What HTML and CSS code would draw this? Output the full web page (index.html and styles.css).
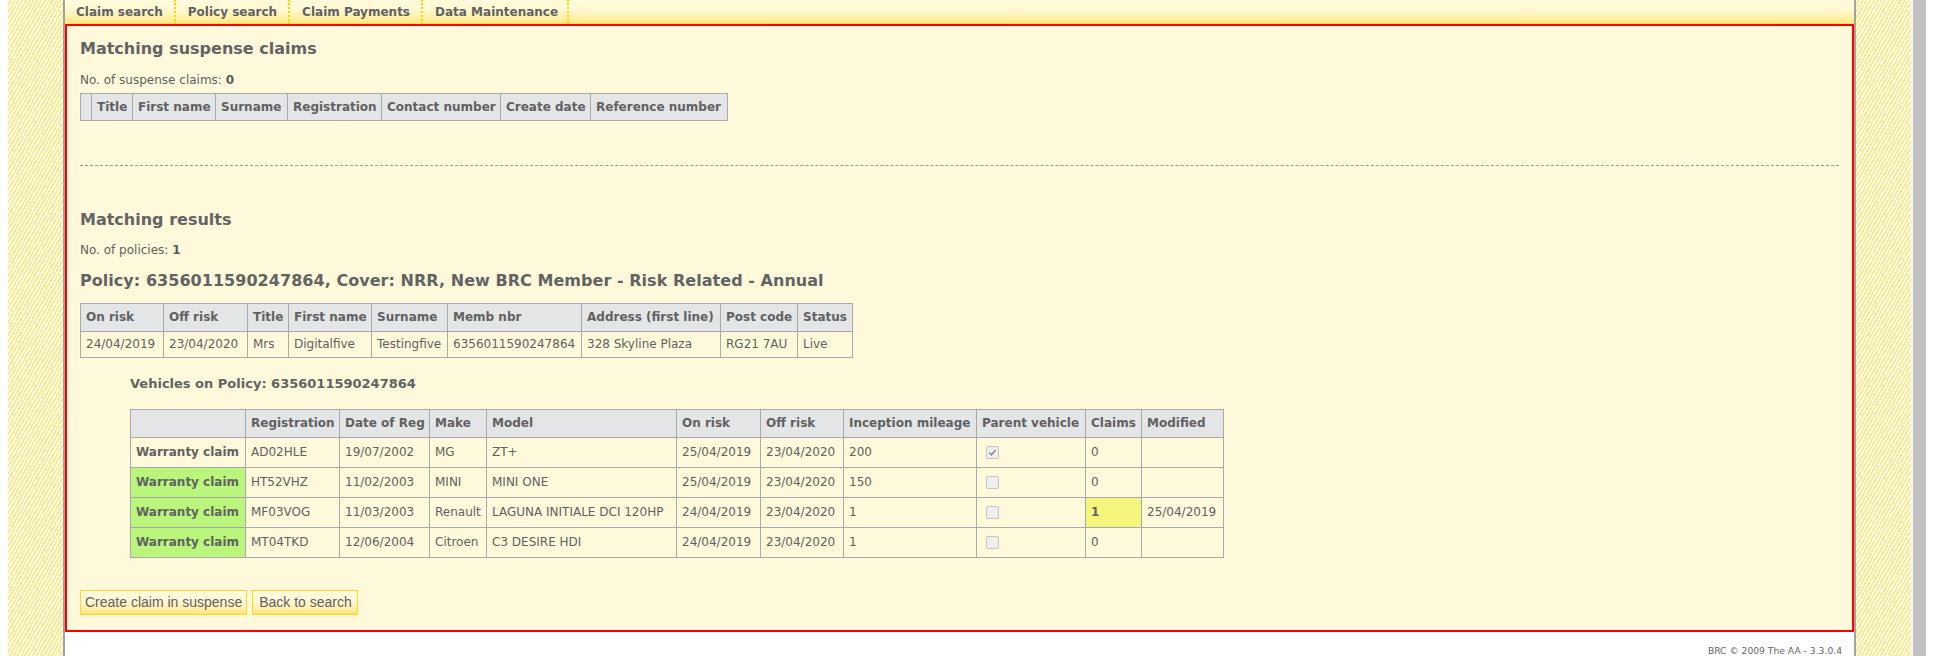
FILE: index.html
```html
<!DOCTYPE html>
<html lang="en">
<head>
<meta charset="utf-8">
<title>BRC - Matching results</title>
<link rel="stylesheet" href="styles.css">
</head>
<body>
<div class="page">
  <div class="gutter"></div>
  <div class="stripes"></div>
  <div class="main">
    <nav class="nav">
      <a class="nav-item" href="#">Claim search</a>
      <a class="nav-item" href="#">Policy search</a>
      <a class="nav-item" href="#">Claim Payments</a>
      <a class="nav-item" href="#">Data Maintenance</a>
    </nav>
    <div class="panel">
      <h2 class="section-title first">Matching suspense claims</h2>
      <p class="count">No. of suspense claims: <b>0</b></p>
      <table class="grid suspense">
        <colgroup>
          <col class="w11"><col class="w41"><col class="w83"><col class="w72"><col class="w94"><col class="w119"><col class="w90"><col class="w137">
        </colgroup>
        <tr class="h27">
          <th></th><th>Title</th><th>First name</th><th>Surname</th><th>Registration</th><th>Contact number</th><th>Create date</th><th>Reference number</th>
        </tr>
      </table>
      <div class="divider"></div>
      <h2 class="section-title results">Matching results</h2>
      <p class="count count-policies">No. of policies: <b>1</b></p>
      <h3 class="policy-title">Policy: 6356011590247864, Cover: NRR, New BRC Member - Risk Related - Annual</h3>
      <table class="grid policy">
        <colgroup>
          <col class="w83"><col class="w84"><col class="w41"><col class="w83"><col class="w76"><col class="w134"><col class="w139"><col class="w77"><col class="w55">
        </colgroup>
        <tr class="h28">
          <th>On risk</th><th>Off risk</th><th>Title</th><th>First name</th><th>Surname</th><th>Memb nbr</th><th>Address (first line)</th><th>Post code</th><th>Status</th>
        </tr>
        <tr class="h26">
          <td>24/04/2019</td><td>23/04/2020</td><td>Mrs</td><td>Digitalfive</td><td>Testingfive</td><td>6356011590247864</td><td>328 Skyline Plaza</td><td>RG21 7AU</td><td>Live</td>
        </tr>
      </table>
      <h4 class="vehicles-title">Vehicles on Policy: 6356011590247864</h4>
      <table class="grid vehicles">
        <colgroup>
          <col class="w115"><col class="w94"><col class="w90"><col class="w57"><col class="w190"><col class="w84"><col class="w83"><col class="w133"><col class="w109"><col class="w56"><col class="w82">
        </colgroup>
        <tr class="h28">
          <th></th><th>Registration</th><th>Date of Reg</th><th>Make</th><th>Model</th><th>On risk</th><th>Off risk</th><th>Inception mileage</th><th>Parent vehicle</th><th>Claims</th><th>Modified</th>
        </tr>
        <tr class="h30">
          <td class="claim">Warranty claim</td><td>AD02HLE</td><td>19/07/2002</td><td>MG</td><td>ZT+</td><td>25/04/2019</td><td>23/04/2020</td><td>200</td>
          <td><span class="chk"><svg width="9" height="9" viewBox="0 0 9 9"><path d="M1.3 4.6 L3.4 6.8 L7.6 1.9" fill="none" stroke="#8c8c8c" stroke-width="1.5"/></svg></span></td>
          <td>0</td><td></td>
        </tr>
        <tr class="h30">
          <td class="claim ok">Warranty claim</td><td>HT52VHZ</td><td>11/02/2003</td><td>MINI</td><td>MINI ONE</td><td>25/04/2019</td><td>23/04/2020</td><td>150</td>
          <td><span class="chk"></span></td>
          <td>0</td><td></td>
        </tr>
        <tr class="h30">
          <td class="claim ok">Warranty claim</td><td>MF03VOG</td><td>11/03/2003</td><td>Renault</td><td>LAGUNA INITIALE DCI 120HP</td><td>24/04/2019</td><td>23/04/2020</td><td>1</td>
          <td><span class="chk"></span></td>
          <td class="has-claims">1</td><td>25/04/2019</td>
        </tr>
        <tr class="h30">
          <td class="claim ok">Warranty claim</td><td>MT04TKD</td><td>12/06/2004</td><td>Citroen</td><td>C3 DESIRE HDI</td><td>24/04/2019</td><td>23/04/2020</td><td>1</td>
          <td><span class="chk"></span></td>
          <td>0</td><td></td>
        </tr>
      </table>
      <div class="actions">
        <button class="btn" type="button">Create claim in suspense</button>
        <button class="btn" type="button">Back to search</button>
      </div>
    </div>
    <footer class="footer">BRC &copy; 2009 The AA - 3.3.0.4</footer>
  </div>
  <div class="stripes"></div>
  <div class="edge"></div>
  <div class="scroll"></div>
  <div class="edge-right"></div>
</div>
</body>
</html>
```

FILE: styles.css
```css
* { box-sizing: border-box; }

html, body {
  margin: 0;
  padding: 0;
  height: 100%;
}

body {
  font-family: "DejaVu Sans", Verdana, sans-serif;
  font-size: 12px;
  color: #616161;
  background: #fff;
  overflow: hidden;
}

.page {
  display: flex;
  height: 656px;
}

.gutter { width: 8px; flex: none; background: #fff; }
.edge { width: 2px; flex: none; background: #f7f7f7; }
.scroll { width: 13px; flex: none; background: #c1c1c1; }
.edge-right { width: 10px; flex: none; background: #fff; }

.stripes {
  width: 55px;
  flex: none;
  background: repeating-linear-gradient(120deg, #fffbe4 0px, #fffbe4 2px, #ffe780 2px, #ffe780 3.3px);
}

.main {
  width: 1793px;
  flex: none;
  display: flex;
  flex-direction: column;
  border-left: 2px solid #a3a3a3;
  border-right: 2px solid #a3a3a3;
  background: #fff;
}

.nav {
  height: 24px;
  flex: none;
  display: flex;
  background: linear-gradient(#fffbdc 0%, #fff8d0 45%, #ffef9a 80%, #ffe877 100%);
}

.nav-item {
  font-weight: bold;
  font-size: 12px;
  line-height: 24px;
  padding: 0 11px 0 12px;
  border-right: 2px dotted #ffd400;
  color: #616161;
  text-decoration: none;
}

.nav-item:first-child { padding-left: 11px; }
.nav-item:last-child { padding-right: 9px; }

.panel {
  flex: 1;
  border: 2px solid #ff0000;
  background: #fff9db;
  padding: 0 13px 15px;
}

.section-title {
  margin: 0;
  font-size: 16px;
  line-height: 20px;
  font-weight: bold;
  color: #636363;
}

.section-title.first { margin-top: 13px; }
.section-title.results { margin-top: 44px; }

.count {
  margin: 13px 0 0;
  line-height: 16px;
  font-size: 12px;
}

.count b { color: #5a5a5a; }

.count-policies { margin-top: 12px; }

.policy-title {
  margin: 13px 0 0;
  font-size: 16px;
  line-height: 20px;
  font-weight: bold;
  color: #636363;
  letter-spacing: 0.04px;
}

.vehicles-title {
  margin: 18px 0 0 50px;
  font-size: 13px;
  line-height: 16px;
  font-weight: bold;
  color: #636363;
}

.divider {
  margin-top: 44px;
  border-top: 1px dashed #9a9a9a;
  height: 0;
}

.grid {
  border-collapse: collapse;
  table-layout: fixed;
  margin-top: 5px;
}

.grid th,
.grid td {
  border: 1px solid #a9a9a9;
  padding: 0 5px;
  text-align: left;
  white-space: nowrap;
  font-size: 12px;
  line-height: 15px;
  color: #616161;
  vertical-align: middle;
}

.grid th {
  background: #e4e5e7;
  font-weight: bold;
}

.suspense { width: 647px; }
.policy { width: 772px; margin-top: 12px; }
.vehicles { width: 1093px; margin: 17px 0 0 50px; }

.h26 { height: 26px; }
.h27 { height: 27px; }
.h28 { height: 28px; }
.h30 { height: 30px; }

.w11 { width: 11px; }
.w41 { width: 41px; }
.w55 { width: 55px; }
.w56 { width: 56px; }
.w57 { width: 57px; }
.w72 { width: 72px; }
.w76 { width: 76px; }
.w77 { width: 77px; }
.w82 { width: 82px; }
.w83 { width: 83px; }
.w84 { width: 84px; }
.w90 { width: 90px; }
.w94 { width: 94px; }
.w109 { width: 109px; }
.w115 { width: 115px; }
.w119 { width: 119px; }
.w133 { width: 133px; }
.w134 { width: 134px; }
.w137 { width: 137px; }
.w139 { width: 139px; }
.w190 { width: 190px; }

.grid td.claim { font-weight: bold; }
.grid td.ok { background: #baf57c; }
.grid td.has-claims { background: #f4f67b; font-weight: bold; }

.chk {
  display: inline-flex;
  align-items: center;
  justify-content: center;
  width: 13px;
  height: 13px;
  margin-left: 4px;
  border: 1px solid #c4c4c4;
  border-radius: 2px;
  background: #efefef;
  vertical-align: middle;
}

.chk svg { display: block; }

.actions {
  display: flex;
  gap: 5px;
  margin-top: 32px;
}

.btn {
  font-family: "Liberation Sans", Arial, sans-serif;
  font-size: 14px;
  color: #616161;
  height: 25px;
  line-height: 23px;
  padding: 0 4px;
  margin: 0;
  border: 1px solid #ffd52a;
  background: linear-gradient(#fffbe2 0%, #fff8d4 50%, #ffef9e 80%, #ffe27a 100%);
  cursor: pointer;
}

.btn + .btn { padding: 0 5px 0 6px; }

.footer {
  height: 25px;
  flex: none;
  padding: 13px 12px 0 0;
  text-align: right;
  font-size: 9.2px;
  line-height: 12px;
  color: #666;
}
```
